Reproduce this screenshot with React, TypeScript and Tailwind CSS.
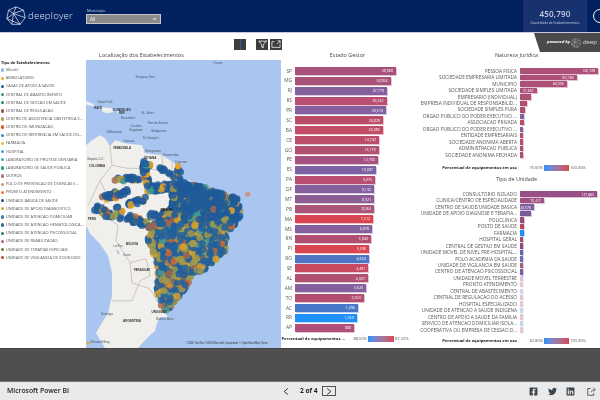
import React from "react";
import { FaFacebookSquare, FaTwitter, FaLinkedin, FaChevronDown } from "react-icons/fa";
import { FiFilter } from "react-icons/fi";

type Row = [string, number, string, string?];

const sans = "font-['Open_Sans','Liberation_Sans',sans-serif]";

const types: [string, string][] = [
  ["(Blank)", "#8fb8e8"], ["AMBULATORIO", "#f0a81e"], ["CASAS DE APOIO A SAUDE", "#1f5f99"],
  ["CENTRAL DE ABASTECIMENTO", "#3f8f88"], ["CENTRAL DE GESTAO EM SAUDE", "#1e8a70"], ["CENTRAL DE REGULACAO", "#8a5a4a"],
  ["CENTRO DE ASSISTENCIA OBSTETRICA E...", "#b89a5a"], ["CENTRO DE IMUNIZACAO", "#e8502a"], ["CENTRO DE REFERENCIA EM SAUDE DO...", "#3f7fc8"],
  ["FARMACIA", "#f0b840"], ["HOSPITAL", "#3f9fe0"], ["LABORATORIO DE PROTESE DENTARIA", "#3fb0a0"],
  ["LABORATORIO DE SAUDE PUBLICA", "#2f9a80"], ["OUTROS", "#b07a70"], ["POLO DE PREVENCAO DE DOENCAS E...", "#c0a070"],
  ["PRONTO ATENDIMENTO", "#f07840"], ["UNIDADE BASICA DE SAUDE", "#1f4f90"], ["UNIDADE DE APOIO DIAGNOSTICO", "#c8a840"],
  ["UNIDADE DE ATENCAO DOMICILIAR", "#3f7fa8"], ["UNIDADE DE ATENCAO HEMATOLOGICA...", "#2f6f90"], ["UNIDADE DE ATENCAO PSICOSSOCIAL", "#1f7f70"],
  ["UNIDADE DE REABILITACAO", "#a07060"], ["UNIDADE DE TERAPIAS ESPECIAIS", "#7a6a3a"], ["UNIDADE DE VIGILANCIA DE ZOONOSES", "#b0482a"],
];

const estado: Row[] = [
  ["SP", 101, "#a8507c", "58,868"], ["MG", 95.7, "#a85278", "53,854"], ["RJ", 92, "#86609c", "47,779"], ["RS", 91.7, "#b84f70", "35,522"],
  ["PR", 91, "#84609e", "33,619"], ["SC", 88, "#bb4d6a", "24,829"], ["BA", 87.7, "#c24c66", "22,589"], ["CE", 84, "#bc4e6c", "14,747"],
  ["GO", 83.7, "#b25070", "15,179"], ["PE", 83, "#a65280", "12,783"], ["ES", 81, "#7c62a4", "10,087"], ["PA", 80, "#b84f70", "9,375"],
  ["DF", 79, "#84609e", "9,132"], ["MT", 79, "#8c5c94", "8,921"], ["PB", 78.7, "#aa5478", "8,044"], ["MA", 78, "#d84450", "7,212"],
  ["MS", 77, "#86609c", "6,878"], ["RN", 76, "#b04e70", "5,840"], ["PI", 74, "#d84652", "5,036"], ["RO", 73.7, "#4f74c4", "4,634"],
  ["SE", 73.3, "#c84a60", "4,491"], ["AL", 73, "#b05072", "4,307"], ["AM", 71, "#86609c", "3,620"], ["TO", 68.7, "#b24e72", "2,553"],
  ["AC", 63, "#4a78c8", "1,096"], ["RR", 61.7, "#1e90f8", "1,569"], ["AP", 59.3, "#b0507a", "888"],
];

const natureza: Row[] = [
  ["PESSOA FISICA", 78, "#ad5077", "165,728"], ["SOCIEDADE EMPRESARIA LIMITADA", 56.7, "#ad5077", "102,783"], ["MUNICIPIO", 46.7, "#ad5077", "84,936"],
  ["SOCIEDADE SIMPLES LIMITADA", 16.7, "#ad5077", "31,667"], ["EMPRESARIO (INDIVIDUAL)", 11, "#ad5077"], ["EMPRESA INDIVIDUAL DE RESPONSABILID...", 6.7, "#b04f70"],
  ["SOCIEDADE SIMPLES PURA", 4.7, "#b04f70"], ["ORGAO PUBLICO DO PODER EXECUTIVO ...", 4, "#84609e"], ["ASSOCIACAO PRIVADA", 3.7, "#b84f60"],
  ["ORGAO PUBLICO DO PODER EXECUTIVO ...", 2, "#84609e"], ["ENTIDADE EMPRESARIAIS", 1.3, "#b04f70"], ["SOCIEDADE ANONIMA ABERTA", 1, "#b04f70"],
  ["ADMINISTRACAO PUBLICA", 1, "#b04f70"], ["SOCIEDADE ANONIMA FECHADA", 1, "#b04f70"],
];

const unidade: Row[] = [
  ["CONSULTORIO ISOLADO", 77, "#984f88", "127,883"], ["CLINICA/CENTRO DE ESPECIALIDADE", 24, "#a05080", "70,417"], ["CENTRO DE SAUDE/UNIDADE BASICA", 14, "#7d5ea0", "43,078"],
  ["UNIDADE DE APOIO DIAGNOSE E TERAPIA...", 11, "#7a5a96"], ["POLICLINICA", 3.7, "#9a4a78"], ["POSTO DE SAUDE", 3.7, "#b34a64"], ["FARMACIA", 3.7, "#1e90f8"],
  ["HOSPITAL GERAL", 2, "#a44a70"], ["CENTRAL DE GESTAO EM SAUDE", 2, "#8a4a80"], ["UNIDADE MOVEL DE NIVEL PRE-HOSPITAL...", 1.3, "#5a6ab0"],
  ["POLO ACADEMIA DA SAUDE", 0.8, "#6a70b8"], ["UNIDADE DE VIGILANCIA EM SAUDE", 0.8, "#a06080"], ["CENTRO DE ATENCAO PSICOSSOCIAL", 0.8, "#7c5ea0"],
  ["UNIDADE MOVEL TERRESTRE", 0.6, "#d8c0d8"], ["PRONTO ATENDIMENTO", 0.6, "#e8c8d0"], ["CENTRAL DE ABASTECIMENTO", 0.6, "#c8d8f0"],
  ["CENTRAL DE REGULACAO DO ACESSO", 0.6, "#e0c8d8"], ["HOSPITAL ESPECIALIZADO", 0.6, "#e8c8d0"], ["UNIDADE DE ATENCAO A SAUDE INDIGENA", 0.6, "#c0d8f0"],
  ["CENTRO DE APOIO A SAUDE DA FAMILIA", 0.6, "#e8c8d0"], ["SERVICO DE ATENCAO DOMICILIAR ISOLA...", 0.6, "#c0d8f0"], ["COOPERATIVA OU EMPRESA DE CESSAO D...", 0.6, "#e8c8d0"],
];

type Pt = [number, number];
const inside = (p: Pt, poly: Pt[]) => {
  let c = false;
  for (let i = 0, j = poly.length - 1; i < poly.length; j = i++) {
    const [xi, yi] = poly[i], [xj, yj] = poly[j];
    if (yi > p[1] !== yj > p[1] && p[0] < ((xj - xi) * (p[1] - yi)) / (yj - yi) + xi) c = !c;
  }
  return c;
};

const dense: Pt[] = [[172,178],[180,176],[192,182],[208,187],[224,193],[238,198],[241,214],[235,224],[227,232],[225,250],[214,261],[204,269],[192,274],[184,290],[174,302],[166,311],[160,303],[157,290],[158,270],[154,254],[147,238],[148,226],[162,218],[172,205],[172,190]];

const strips: [Pt, Pt, number, number][] = [
  [[105,196],[118,194],3,26],[[118,194],[130,190],2,12],[[148,188],[178,186],3.5,60],[[116,179],[138,178],2,22],[[143,163],[148,186],2,30],
  [[96,207],[118,218],3,38],[[128,204],[146,198],2,18],[[128,217],[150,226],3,34],[[150,214],[172,214],3,24],[[116,205],[122,212],1,6],
  [[144,162],[150,166],1.5,10],[[160,168],[176,176],1.5,10],[[176,165],[180,172],1,6],
];

function makeBubbles() {
  let s = 12345;
  const r = () => ((s = (s * 1664525 + 1013904223) >>> 0), s / 4294967296);
  const out: { x: number; y: number; c: string }[] = [];
  const pick = (south: boolean) => {
    const v = r();
    if (south) {
      if (v < 0.52) return "#20609c";
      if (v < 0.75) return "#a09a4c";
      if (v < 0.84) return "#a5664a";
      if (v < 0.91) return "#d9a02e";
      if (v < 0.96) return "#4d9a90";
      return "#c8683a";
    }
    if (v < 0.8) return "#1f5b98";
    if (v < 0.89) return "#a09a4c";
    if (v < 0.95) return "#a5664a";
    if (v < 0.98) return "#e8a326";
    return "#3f9a90";
  };
  strips.forEach(([a, b, w, n]) => {
    for (let i = 0; i < n; i++) {
      const t = r();
      out.push({ x: a[0] + (b[0] - a[0]) * t + (r() - 0.5) * 2 * w, y: a[1] + (b[1] - a[1]) * t + (r() - 0.5) * 2 * w, c: r() < 0.1 ? "#e8a326" : pick(false) });
    }
  });
  for (let i = 0; i < 1500; ) {
    const p: Pt = [146 + r() * 96, 175 + r() * 137];
    if (!inside(p, dense)) continue;
    out.push({ x: p[0], y: p[1], c: pick(p[1] > 222) });
    i++;
  }
  return out;
}
const bubbles = makeBubbles();

const mapLabels: [string, number, number, boolean?][] = [
  ["Ocean", 218, 64], ["Sargasso Sea", 145, 78], ["Grand Turk", 105, 103], ["HAITI", 98, 109, true], ["DOMINICAN", 122, 111, true], ["REP.", 122, 114, true],
  ["St. John's", 148, 114], ["Basseterre", 128, 119], ["Fort-de-France", 158, 124], ["Castries", 136, 127], ["Kingstown", 136, 131], ["Bridgetown", 159, 132],
  ["Willemstad", 114, 133], ["St. George's", 151, 139], ["Caracas", 129, 142], ["VENEZUELA", 122, 149, true], ["Georgetown", 153, 152], ["Paramaribo", 171, 156],
  ["GUYANA", 150, 159, true], ["Cayenne", 181, 163], ["Bogotá, D.C.", 96, 160], ["COLOMBIA", 97, 167, true], ["PERU", 92, 219, true],
  ["BOLIVIA", 132, 244, true], ["La Paz", 118, 246], ["Sucre", 127, 255], ["PARAGUAY", 142, 270, true], ["Santiago", 107, 314], ["ARGENTINA", 132, 321.5, true],
  ["URUGUAY", 159, 312, true], ["Buenos Aires", 165, 319], ["Microsoft Bing", 100, 342.5],
];

function BrazilMap() {
  return (
    <svg viewBox="86 60 195 287" className="w-full h-full block bg-[#a9c6f0]" preserveAspectRatio="none">
      <path d="M86,145 L92,140 L100,135 L105,138 L110,146 L115,140 L125,143 L142,145 L145,153 L162,155 L173,162 L180,168 L183,178 L195,182 L208,187 L225,192 L238,198 L242,215 L236,225 L228,232 L226,250 L215,262 L205,270 L192,275 L185,290 L175,303 L165,312 L168,316 L160,316 L157,322 L155,330 L148,336 L138,347 L105,347 L96,332 L100,325 L108,312 L112,295 L112,272 L108,255 L100,243 L90,233 L86,225 Z" fill="#f1efeb" />
      <path d="M86,101 L92,103 L95,106 L88,105 L86,104 Z M102,107 L112,108 L113,112 L106,113 L102,111 Z M117,111 L120,111 L120,112.5 L117,112.5 Z" fill="#f1efeb" />
      <g fill="none" stroke="#b9b6ae" strokeWidth="0.7">
        <path d="M110,146 L112,165 L100,180 L88,205 M112,165 L128,168 L145,168 M145,155 L147,168 L160,170 M162,155 L163,168 M172,162 L172,172 M100,180 L108,197 L100,210 L118,225 L116,240 L130,262 L146,258 L150,275 L140,280 L132,300 L112,300 M130,262 L132,282 L150,288 L158,302" />
      </g>
      <path d="M116,248 L120,252 L118,254 Z" fill="#a9c6f0" />
      {bubbles.map((b, i) => (
        <circle key={i} cx={b.x} cy={b.y} r="3.5" fill={b.c} fillOpacity="0.84" />
      ))}
      <circle cx="247.7" cy="193.7" r="2.6" fill="#d98b78" fillOpacity="0.85" />
      <circle cx="178" cy="166" r="3" fill="#e8a326" />
      {mapLabels.map(([t, x, y, b], i) => (
        <text key={i} x={x} y={y} textAnchor="middle" fontSize="3" fontWeight={b ? 700 : 400} fill={b ? "#333333" : "#4a5560"} fontFamily="'Liberation Sans',sans-serif">{t}</text>
      ))}
      <text x="167" y="210" textAnchor="middle" fontSize="3.6" fontWeight={700} fill="#222222" fontFamily="'Liberation Sans',sans-serif">BRAZIL</text>
      <rect x="87" y="341" width="2.6" height="2.6" fill="#e8a326" />
      <text x="227" y="342.8" textAnchor="middle" fontSize="2.6" fill="#333333" fontFamily="'Liberation Sans',sans-serif">©2020 TomTom ©2020 Microsoft Corporation © OpenStreetMap Terms</text>
    </svg>
  );
}

function Logo({ className, stroke = "#ffffff" }: { className: string; stroke?: string }) {
  return (
    <svg viewBox="0 0 24 24" className={className} fill="none" stroke={stroke} strokeWidth="0.8">
      <path d="M12 1 L21 5 L23 14 L17 22 L7 22 L1 15 L3 5 Z" />
      <path d="M3 5 L9 9 L21 5 M9 9 L1 15 M9 9 L17 22 M9 9 L23 14 M7 22 L9 9 M12 1 L9 9 M1 15 L17 22" />
    </svg>
  );
}

function Bar({ row, h, big }: { row: Row; h: string; big?: boolean }) {
  return (
    <div
      className={`${h} flex items-center justify-end pr-[3px] text-white ${big ? "text-[3.6px]" : "text-[3.4px]"}`}
      style={{ width: row[1], backgroundColor: row[2], boxShadow: `1px 1px 0 ${row[2]}55` }}
    >
      {row[3]}
    </div>
  );
}

function HRows({ rows }: { rows: Row[] }) {
  return (
    <div className="flex flex-col">
      {rows.map((r, i) => (
        <div key={i} className="h-[6.47px] flex items-center">
          <div className="w-[107px] text-right whitespace-nowrap text-[4.75px] leading-none text-[#555555]">{r[0]}</div>
          <div className="ml-[3px]">
            <Bar row={r} h="h-[5.4px]" />
          </div>
        </div>
      ))}
    </div>
  );
}

function GradientLegend({ min, max, w }: { min: string; max: string; w: string }) {
  return (
    <div className="h-[7px] flex items-center">
      <div className={`${w} text-right whitespace-nowrap font-bold text-[#222222] text-[4.1px] leading-none`}>Percentual de equipamentos em uso</div>
      <div className="w-[23px] ml-[3px] text-right text-[4px] text-[#555555]">{min}</div>
      <div className="w-[25px] h-[6px] mx-[1px] bg-gradient-to-r from-[#1e90f8] to-[#d84450]" />
      <div className="text-[4px] text-[#555555] whitespace-nowrap">{max}</div>
    </div>
  );
}

export default function App() {
  return (
    <div className={`${sans} w-[600px] h-[400px] overflow-hidden flex flex-col bg-white blur-[0.3px]`}>
      <header className="h-[33px] shrink-0 bg-[#012060] border-b border-[#c3cadb] flex items-start">
        <Logo className="w-[20px] h-[22px] ml-[6px] mt-[5px]" />
        <div className="ml-[2px] mt-[7px] text-[#dfe5f2] text-[9.6px] leading-[17px] font-light tracking-[0.2px] w-[58px]">deeployer</div>
        <div className="flex flex-col mt-[7px]">
          <div className="text-[4px] leading-[7px] ml-[1px] text-[#d8deeb]">Municipio</div>
          <div className="w-[75px] h-[10px] bg-[#8b8b8b] border border-[#c8c8c8] flex items-center justify-between px-[3px] text-[4.5px] text-white">
            All
            <FaChevronDown className="w-[5px] h-[4px]" />
          </div>
        </div>
        <div className="ml-auto w-[64px] h-[32px] bg-[#17326e] flex flex-col items-center pt-[9px] text-[#c9d0e2]">
          <div className="text-[8px] leading-[10px] font-semibold tracking-[0.2px]">450,790</div>
          <div className="text-[3.2px] leading-[8px]">Quantidade de Estabelecimentos</div>
        </div>
        <div className="w-[13px] pl-[6px] pt-[9px]">
          <div className="w-[14px] h-[14px] rounded-full border border-white" />
        </div>
      </header>

      <main className="relative h-[315px] shrink-0 flex bg-white">
        <div className="absolute left-[534px] top-0 w-[66px] h-[19px] bg-[#4a4a4a] [clip-path:polygon(0_0,100%_0,100%_100%,6px_100%)] flex items-center pl-[13px] gap-[1.5px] text-white whitespace-nowrap">
          <span className="text-[4.2px] italic font-bold">powered by</span>
          <Logo className="w-[10px] h-[10px]" stroke="#cfcfcf" />
          <span className="text-[6px] text-[#dddddd]">deep</span>
        </div>
        <div className="absolute left-[234px] top-[6px] flex">
          <div className="w-[12px] h-[11px] bg-[#3d3d3d] flex justify-center"><div className="w-[1px] h-full bg-[#1f5fa0]" /></div>
          <div className="w-[12px] h-[11px] ml-[10px] bg-[#3d3d3d] flex items-center justify-center text-white"><FiFilter className="w-[9px] h-[9px]" /></div>
          <div className="w-[12px] h-[11px] ml-[2px] bg-[#3d3d3d] flex items-center justify-center">
            <svg viewBox="0 0 12 11" className="w-[10px] h-[9px]" fill="none" stroke="#ffffff" strokeWidth="0.9"><path d="M4 2 H1 V9 H11 V5 M7 5 L11 1 M8 1 H11 V4" /></svg>
          </div>
        </div>

        <aside className="w-[86px] shrink-0 pl-[1px] pt-[27px]">
          <div className="h-[6px] text-[4px] leading-[6px] font-bold text-[#222222]">Tipo de Estabelecimento</div>
          {types.map(([t, c], i) => (
            <div key={i} className="h-[8.17px] flex items-center whitespace-nowrap">
              <span className="w-[3.4px] h-[3.4px] rounded-full mr-[1.4px] shrink-0" style={{ backgroundColor: c }} />
              <span className="text-[4px] leading-none text-[#555555]">{t}</span>
            </div>
          ))}
        </aside>

        <section className="w-[195px] shrink-0 flex flex-col pt-[18px]">
          <div className="h-[8px] text-[5.4px] leading-[8px] text-center text-[#444444] pr-[84px] whitespace-nowrap">Localização dos Estabelecimentos</div>
          <div className="h-[288px] mt-[1px]"><BrazilMap /></div>
        </section>

        <section className="w-[129px] shrink-0 flex flex-col pt-[18px]">
          <div className="h-[8px] mb-[7px] text-[5.4px] leading-[8px] text-center text-[#444444] pl-[4px]">Estado Gestor</div>
          {estado.map((r, i) => (
            <div key={i} className="h-[9.88px] flex items-center">
              <div className="w-[11px] text-right text-[4.8px] leading-none text-[#555555]">{r[0]}</div>
              <div className="ml-[3px]"><Bar row={r} h="h-[8px]" big /></div>
            </div>
          ))}
          <div className="h-[7px] mt-[3px] flex items-center whitespace-nowrap">
            <div className="w-[64px] text-right font-bold text-[#222222] text-[4.1px] leading-none">Percentual de equipamentos ...</div>
            <div className="w-[22px] text-right text-[4px] text-[#555555]">88.00%</div>
            <div className="w-[26px] h-[6px] mx-[1px] bg-gradient-to-r from-[#1e90f8] to-[#d84450]" />
            <div className="text-[4px] text-[#555555]">87.22%</div>
          </div>
        </section>

        <section className="flex-1 flex flex-col pt-[18px]">
          <div className="h-[8px] mb-[8.8px] text-[5.4px] leading-[8px] text-center text-[#444444] pl-[23px]">Natureza Jurídica</div>
          <HRows rows={natureza} />
          <div className="mt-[6.3px]"><GradientLegend min="75.00%" max="100.00%" w="w-[107px]" /></div>
          <div className="h-[8px] mt-[3.5px] mb-[7.8px] text-[5.4px] leading-[8px] text-center text-[#444444] pl-[23px]">Tipo de Unidade</div>
          <HRows rows={unidade} />
          <div className="mt-[4px]"><GradientLegend min="82.80%" max="100.00%" w="w-[107px]" /></div>
        </section>
      </main>

      <div className="h-[34px] shrink-0 bg-[#4f4f4f] border-t border-[#444444] border-b border-b-[#777777]" />

      <footer className="h-[18px] shrink-0 bg-[#eaeaea] flex items-center pl-[7px] text-[#222222]">
        <div className="text-[6.8px] font-semibold w-[276px] whitespace-nowrap">Microsoft Power BI</div>
        <svg viewBox="0 0 8 10" className="w-[6px] h-[9px]" fill="none" stroke="#222222" strokeWidth="1.2"><path d="M6.5 1 L1.5 5 L6.5 9" /></svg>
        <div className="ml-[11px] w-[22px] text-[6.6px] font-bold whitespace-nowrap">2 of 4</div>
        <div className="ml-[0px] w-[14px] h-[10px] border border-[#555555] flex items-center justify-center">
          <svg viewBox="0 0 8 10" className="w-[6px] h-[9px]" fill="none" stroke="#222222" strokeWidth="1.2"><path d="M1.5 1 L6.5 5 L1.5 9" /></svg>
        </div>
        <div className="ml-[193px] flex items-center gap-[9.5px] text-[#3c4650]">
          <FaFacebookSquare className="w-[9px] h-[9px]" />
          <FaTwitter className="w-[9px] h-[9px]" />
          <FaLinkedin className="w-[9px] h-[9px]" />
          <svg viewBox="0 0 12 12" className="w-[9px] h-[9px] ml-[2px]" fill="none" stroke="#3c4650" strokeWidth="1.1"><path d="M5 2 H1 V11 H9 V8 M6 7 C6 4.5 8 3.5 10 3.5 M8.5 1 L11 3.5 L8.5 6" /></svg>
        </div>
      </footer>
    </div>
  );
}
